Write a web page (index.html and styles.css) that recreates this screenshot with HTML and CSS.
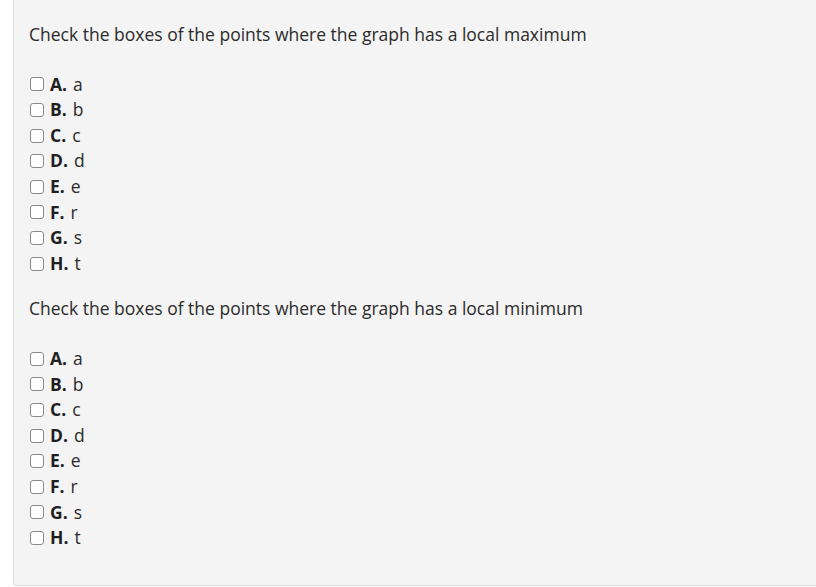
FILE: index.html
```html
<!DOCTYPE html>
<html lang="en">
<head>
<meta charset="utf-8">
<title>Local extrema</title>
<link rel="stylesheet" href="styles.css">
</head>
<body>
<div class="panel">
  <p class="question">Check the boxes of the points where the graph has a local maximum</p>
  <ul class="choices">
    <li><label><input type="checkbox"><b>A.</b> a</label></li>
    <li><label><input type="checkbox"><b>B.</b> b</label></li>
    <li><label><input type="checkbox"><b>C.</b> c</label></li>
    <li><label><input type="checkbox"><b>D.</b> d</label></li>
    <li><label><input type="checkbox"><b>E.</b> e</label></li>
    <li><label><input type="checkbox"><b>F.</b> r</label></li>
    <li><label><input type="checkbox"><b>G.</b> s</label></li>
    <li><label><input type="checkbox"><b>H.</b> t</label></li>
  </ul>
  <p class="question">Check the boxes of the points where the graph has a local minimum</p>
  <ul class="choices">
    <li><label><input type="checkbox"><b>A.</b> a</label></li>
    <li><label><input type="checkbox"><b>B.</b> b</label></li>
    <li><label><input type="checkbox"><b>C.</b> c</label></li>
    <li><label><input type="checkbox"><b>D.</b> d</label></li>
    <li><label><input type="checkbox"><b>E.</b> e</label></li>
    <li><label><input type="checkbox"><b>F.</b> r</label></li>
    <li><label><input type="checkbox"><b>G.</b> s</label></li>
    <li><label><input type="checkbox"><b>H.</b> t</label></li>
  </ul>
</div>
</body>
</html>
```

FILE: styles.css
```css
html, body {
  margin: 0;
  padding: 0;
  background: #ffffff;
  overflow: hidden;
}

body {
  font-family: "Open Sans", "Noto Sans", sans-serif;
  font-size: 17.5px;
  line-height: 25.6px;
  color: #2b2b2b;
}

.panel {
  margin-left: 13px;
  margin-right: -20px;
  background: #f4f4f4;
  border: 1px solid #dddddd;
  border-top: none;
  border-radius: 0 0 4px 4px;
  padding: 22px 15px 34px 15px;
}

.question {
  margin: 0 0 24px 0;
}

.choices {
  list-style: none;
  margin: 0 0 20px 0;
  padding: 0;
}

.choices:last-child {
  margin-bottom: 0;
}

.choices label {
  display: flex;
  align-items: center;
  gap: 6px;
}

.choices input {
  appearance: none;
  -webkit-appearance: none;
  width: 14px;
  height: 14px;
  margin: 0 0 0 1px;
  border: 1.5px solid #8a8a8a;
  border-radius: 3px;
  background: #ffffff;
  flex: none;
}

.choices b {
  font-weight: 700;
  color: #1f1f1f;
}
```
